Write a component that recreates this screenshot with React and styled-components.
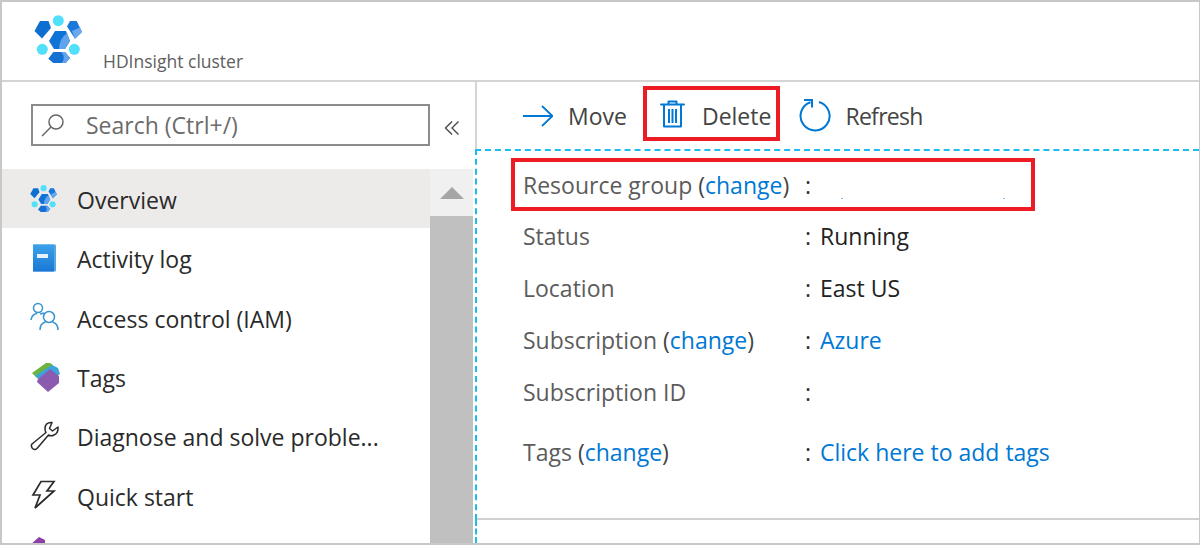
import React from "react";
import styled, { createGlobalStyle } from "styled-components";

const Global = createGlobalStyle`
  html, body { margin: 0; padding: 0; background: #fff; overflow: hidden; }
  * { box-sizing: border-box; }
`;
const Page = styled.div`
  width: 1200px; height: 545px; display: flex; flex-direction: column;
  border: 2px solid #c8c8c8; border-right-width: 1px; background: #fff; overflow: hidden;
  font-family: "Open Sans", "Noto Sans", sans-serif; font-size: 23px; color: #2a2a2a;
`;
const Header = styled.header`
  flex: 0 0 80px; display: flex; align-items: flex-start; border-bottom: 2px solid #d4d4d4;
  padding: 13px 0 0 32px; gap: 19px;
`;
const Subtitle = styled.div`font-size: 17.5px; color: #5e5e5e; margin-top: 33px; line-height: 26px;`;
const Main = styled.div`flex: 1; display: flex; min-height: 0; overflow: hidden;`;
const Sidebar = styled.aside`flex: 0 0 473px; display: flex; flex-direction: column; min-height: 0;`;
const SearchRow = styled.div`
  flex: 0 0 87px; display: flex; align-items: flex-start; padding: 22px 0 0 29px;
`;
const SearchBox = styled.div`
  width: 399px; height: 42px; border: 2px solid #8c8c8c; display: flex; align-items: center;
  padding-left: 6px; gap: 19px; color: #6b6b6b;
`;
const Collapse = styled.div`margin: 16px 0 0 14px; display: flex;`;
const NavWrap = styled.div`flex: 1; display: flex; min-height: 0;`;
const Nav = styled.nav`flex: 0 0 428px; display: flex; flex-direction: column;`;
const NavItem = styled.div`
  flex: 0 0 59.3px; display: flex; align-items: center; padding-left: 28px;
  background: ${(p) => (p.$active ? "#edebea" : "transparent")};
`;
const NavIcon = styled.span`flex: 0 0 47px; display: flex; align-items: center;`;
const NavLabel = styled.span`margin-top: 3px; white-space: nowrap;`;
const Scrollbar = styled.div`flex: 0 0 43px; display: flex; flex-direction: column; background: #f0f0f0;`;
const ScrollUp = styled.div`flex: 0 0 47px; display: flex; align-items: center; justify-content: center;`;
const ScrollArrow = styled.div`
  width: 0; height: 0; border-left: 12px solid transparent; border-right: 12px solid transparent;
  border-bottom: 12px solid #a6a6a6;
`;
const ScrollThumb = styled.div`flex: 1; background: #c0c0c0;`;
const Content = styled.section`flex: 1; display: flex; flex-direction: column; min-width: 0;`;
const Toolbar = styled.div`
  flex: 0 0 67px; display: flex; align-items: flex-start; border-left: 2px solid #d4d4d4;
  padding: 4px 0 0 46px; color: #444;
`;
const ToolButton = styled.div`
  display: flex; align-items: center; height: 55px; padding-top: 4px;
  gap: ${(p) => p.$gap}px;
  margin-left: ${(p) => p.$ml || 0}px;
  ${(p) => p.$flagged && `border: 4px solid #ed1c24; padding: 0 5px 0 13px;`}
`;
const ToolLabel = styled.span`
  margin-top: ${(p) => p.$mt || 0}px;
  letter-spacing: ${(p) => p.$ls || 0}px;
`;
const Details = styled.div`
  flex: 0 0 371px; border-top: 2px dashed #1ebbee; border-left: 2px dashed #1ebbee;
  padding-top: 7px; display: flex; flex-direction: column; position: relative;
  &::after { content: ""; position: absolute; left: 0; right: 0; bottom: 0; height: 2px; background: #d0d0d0; }
`;
const Row = styled.div`
  display: grid; grid-template-columns: 282px 15px 1fr; align-items: center; margin-left: 46px;
  height: ${(p) => p.$h || 52}px; padding-bottom: 2px;
`;
const FlaggedRow = styled(Row)`
  margin-left: 34px; width: 524px; height: 53px; padding: 0 0 0 8px; border: 4px solid #ed1c24;
`;
const Label = styled.div`color: #5c5c5c; white-space: nowrap;`;
const Paren = styled.span`color: #444;`;
const Colon = styled.div`color: #333;`;
const Value = styled.div`color: #222; white-space: nowrap;`;
const Link = styled.a`color: #0078d4; text-decoration: none;`;
const Specks = styled.div`display: flex; gap: 160px; padding: 36px 0 0 21px; align-self: start;`;
const Speck = styled.i`display: block; width: 2px; height: 1px; background: #7fbce8;`;
const Footer = styled.div`flex: 1; border-left: 2px dashed #1ebbee;`;

const Logo = ({ size = 50 }) => (
  <svg width={size} height={size} viewBox="0 0 50 50">
    <polygon points="6,6 14.500,6 17,13 8,23.500 0.500,16" fill="#0f6fd0" />
    <polygon points="33,11.500 36,6 42.700,6 48,17 41,23.700" fill="#1a78d8" />
    <polygon points="38,16 46,12.500 48,17 41,23.700" fill="#6aa8ee" />
    <polygon points="15,26 21,16 32,16 36,26 31,34 20,34" fill="#0f72d6" />
    <path d="M25 34 Q25 24 33 18 L36 26 L31 34Z" fill="#62a3ee" />
    <polygon points="14.300,43.700 19.300,37 31,37 36,43 31.700,48 19.300,48" fill="#1470d2" />
    <path d="M27 37 H31 L36 43 L31.700 48 H28 Q32 42 27 37Z" fill="#62a3ee" />
    <circle cx="24.300" cy="5.700" r="5.500" fill="#50e0fb" />
    <circle cx="8.300" cy="34.300" r="5.500" fill="#50e0fb" />
    <circle cx="40.300" cy="34.300" r="5.500" fill="#50e0fb" />
  </svg>
);
const SearchIcon = () => (
  <svg width="28" height="28" viewBox="0 0 28 28" fill="none" stroke="#666" strokeWidth="1.500">
    <circle cx="17" cy="11" r="7" /><path d="M12 16 L3 25" />
  </svg>
);
const Chevrons = () => (
  <svg width="16" height="16" viewBox="0 0 16 16" fill="none" stroke="#444" strokeWidth="1.300">
    <path d="M8 1.500 L1.500 8 L8 14.500 M14.500 1.500 L8 8 L14.500 14.500" />
  </svg>
);
const Book = () => (
  <svg width="28" height="28" viewBox="-2 0 28 28">
    <defs><linearGradient id="bk" x1="0" y1="0" x2="0" y2="1"><stop offset="0" stopColor="#3ba2ec" /><stop offset="1" stopColor="#1a78d4" /></linearGradient></defs>
    <rect x="1" y="0.500" width="23" height="27" rx="1" fill="#5aa7e0" />
    <rect x="1" y="0.500" width="21" height="27" fill="url(#bk)" />
    <rect x="5" y="10" width="11" height="4" fill="#e6f3fc" />
  </svg>
);
const Users = () => (
  <svg width="30" height="30" viewBox="0 0 30 30" fill="none" stroke="#3793cf" strokeWidth="1.500">
    <circle cx="8" cy="6" r="4.500" /><path d="M1 18 Q2 12 7 11.500 M14 11 L10 12" />
    <circle cx="19" cy="15" r="5.500" /><path d="M10 28 Q10 21.500 15.500 20 M22.500 20 Q28 21.500 28 28" />
  </svg>
);
const Tag = () => (
  <svg width="30" height="30" viewBox="-2 0 30 30">
    <polygon points="0,11 14,1 18,1 21,3 6,17" fill="#6cb33f" />
    <polygon points="3,14 20,3 26,6 28,12 14,21" fill="#3aa5dc" />
    <polygon points="6,17 18,7 27,14 27,21 16,30 5,20" fill="#8b5bb0" />
  </svg>
);
const Wrench = () => (
  <svg width="30" height="30" viewBox="0 0 30 30" fill="none" stroke="#2b2b2b" strokeWidth="1.500" strokeLinejoin="round">
    <path d="M22 1.500 Q15 1 15 8 Q15 10 16 11.500 L2 23 Q0.500 25 2.500 27.500 Q5 29.500 7 27.500 L18.500 14 Q21 15.500 24 14 Q28.500 12 28 6 L22.500 10 L19.500 7.500 Z" />
  </svg>
);
const Bolt = () => (
  <svg width="28" height="30" viewBox="-1 0 28 30" fill="none" stroke="#2b2b2b" strokeWidth="1.700" strokeLinejoin="miter">
    <polygon points="10,1.500 23,1.500 16,11 23,11 4,28 9,15 2,15" />
  </svg>
);
const Purple = () => (
  <svg width="26" height="34" viewBox="0 0 26 34"><polygon points="9,0 15,3 15,34 0,34 0,8" fill="#8b3fa8" /></svg>
);
const Arrow = () => (
  <svg width="30" height="22" viewBox="0 0 30 22" fill="none" stroke="#0078d4" strokeWidth="1.800">
    <path d="M0 11 H29 M19 1 L29.500 11 L19 21" />
  </svg>
);
const Trash = () => (
  <svg width="25" height="28" viewBox="0 0 25 28" fill="none" stroke="#0078d4" strokeWidth="2" strokeLinecap="round" strokeLinejoin="round">
    <path d="M1 4.500 H24 M8.500 4.500 V1.500 H16.500 V4.500 M4 4.500 V26.500 H21 V4.500" />
    <path d="M9 9 V23 M12.500 9 V23 M16 9 V23" strokeLinecap="butt" />
  </svg>
);
const Refresh = () => (
  <svg width="32" height="33" viewBox="0 0 32 33" fill="none" stroke="#0078d4" strokeWidth="2">
    <path d="M20 3 A14.500 14.500 0 1 1 11.500 3.200" />
    <path d="M5 1 H13 V8.500" />
  </svg>
);

const items = [
  { icon: <Logo size={28} />, label: "Overview", active: true },
  { icon: <Book />, label: "Activity log" },
  { icon: <Users />, label: "Access control (IAM)" },
  { icon: <Tag />, label: "Tags" },
  { icon: <Wrench />, label: "Diagnose and solve proble..." },
  { icon: <Bolt />, label: "Quick start" },
  { icon: <Purple />, label: "" },
];

export default function App() {
  return (
    <Page>
      <Global />
      <Header><Logo /><Subtitle>HDInsight cluster</Subtitle></Header>
      <Main>
        <Sidebar>
          <SearchRow>
            <SearchBox><SearchIcon />Search (Ctrl+/)</SearchBox>
            <Collapse><Chevrons /></Collapse>
          </SearchRow>
          <NavWrap>
            <Nav>
              {items.map((it, i) => (
                <NavItem key={i} $active={it.active}><NavIcon>{it.icon}</NavIcon><NavLabel>{it.label}</NavLabel></NavItem>
              ))}
            </Nav>
            <Scrollbar><ScrollUp><ScrollArrow /></ScrollUp><ScrollThumb /></Scrollbar>
          </NavWrap>
        </Sidebar>
        <Content>
          <Toolbar>
            <ToolButton $gap={15}><Arrow /><ToolLabel>Move</ToolLabel></ToolButton>
            <ToolButton $gap={17} $ml={16} $flagged><Trash /><ToolLabel $mt={5}>Delete</ToolLabel></ToolButton>
            <ToolButton $gap={14} $ml={19}><Refresh /><ToolLabel $ls={-0.7}>Refresh</ToolLabel></ToolButton>
          </Toolbar>
          <Details>
            <FlaggedRow>
              <Label>Resource group <Paren>(</Paren><Link>change</Link><Paren>)</Paren></Label>
              <Colon>:</Colon>
              <Specks><Speck /><Speck /></Specks>
            </FlaggedRow>
            <Row><Label>Status</Label><Colon>:</Colon><Value>Running</Value></Row>
            <Row><Label>Location</Label><Colon>:</Colon><Value>East US</Value></Row>
            <Row><Label>Subscription <Paren>(</Paren><Link>change</Link><Paren>)</Paren></Label><Colon>:</Colon><Value><Link>Azure</Link></Value></Row>
            <Row><Label>Subscription ID</Label><Colon>:</Colon><Value /></Row>
            <Row $h={68}><Label>Tags <Paren>(</Paren><Link>change</Link><Paren>)</Paren></Label><Colon>:</Colon><Value><Link>Click here to add tags</Link></Value></Row>
          </Details>
          <Footer />
        </Content>
      </Main>
    </Page>
  );
}
